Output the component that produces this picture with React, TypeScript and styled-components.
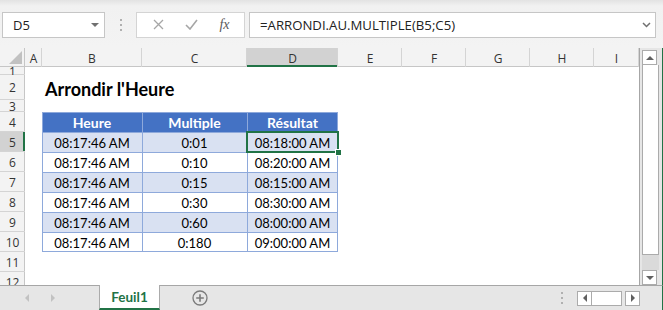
import React from 'react'
import styled, { createGlobalStyle, css } from 'styled-components'

const GlobalStyle = createGlobalStyle`
  html, body {
    margin: 0;
    padding: 0;
  }
  body {
    width: 663px;
    height: 310px;
    overflow: hidden;
    background: #f3f3f3;
    font-family: "Open Sans", "Noto Sans", sans-serif;
  }
`

const GREEN = '#217346'

const columns = ['A', 'B', 'C', 'D', 'E', 'F', 'G', 'H', 'I']
const colWidths = [17, 100, 105, 91, 64, 64, 64, 64, 45]
const rowHeights = [8, 25, 12, 20, 20, 20, 20, 20, 20, 20, 20, 20]

const tableHead = ['Heure', 'Multiple', 'Résultat']
const tableRows = [
  ['08:17:46 AM', '0:01', '08:18:00 AM'],
  ['08:17:46 AM', '0:10', '08:20:00 AM'],
  ['08:17:46 AM', '0:15', '08:15:00 AM'],
  ['08:17:46 AM', '0:30', '08:30:00 AM'],
  ['08:17:46 AM', '0:60', '08:00:00 AM'],
  ['08:17:46 AM', '0:180', '09:00:00 AM'],
]

const Window = styled.div`
  width: 663px;
  height: 310px;
  display: flex;
  flex-direction: column;
  overflow: hidden;
`

const FormulaBar = styled.div`
  height: 48px;
  flex: none;
  display: flex;
  align-items: center;
  padding: 1px 7px 0 2px;
  box-sizing: border-box;
  background: linear-gradient(#e2e2e2 0, #f1f1f1 6px, #f3f3f3 100%);
`

const NameBox = styled.div`
  width: 103px;
  height: 26px;
  box-sizing: border-box;
  border: 1px solid #c6c6c6;
  background: #fff;
  display: flex;
  align-items: center;
  justify-content: space-between;
  padding: 0 5px 0 10px;
  font-size: 13px;
  color: #222;
`

const Caret = styled.span`
  width: 0;
  height: 0;
  border-left: 4px solid transparent;
  border-right: 4px solid transparent;
  border-top: 4px solid #707070;
`

const Grip = styled.div`
  width: 31px;
  display: flex;
  flex-direction: column;
  align-items: center;
  gap: 3px;
  span {
    width: 2px;
    height: 2px;
    background: #b0b0b0;
  }
`

const FxGroup = styled.div`
  width: 109px;
  height: 26px;
  box-sizing: border-box;
  border: 1px solid #d4d4d4;
  background: #fff;
  display: flex;
  align-items: center;
  justify-content: space-around;
  padding: 0 4px 0 6px;
  color: #a6a6a6;
`

const Fx = styled.span`
  font-family: "Liberation Serif", serif;
  font-style: italic;
  font-size: 14px;
  color: #5a5a5a;
`

const FormulaInput = styled.div`
  flex: 1;
  margin-left: 4px;
  height: 26px;
  box-sizing: border-box;
  border: 1px solid #c6c6c6;
  background: #fff;
  display: flex;
  align-items: center;
  justify-content: space-between;
  padding: 0 4px 0 10px;
  font-size: 13.2px;
  color: #222;
`

const SheetArea = styled.div`
  flex: 1;
  display: flex;
  min-height: 0;
`

const GridWrap = styled.div`
  width: 640px;
  box-sizing: border-box;
  border-right: 1px solid #a6a6a6;
  overflow: hidden;
  background: #fff;
`

const Grid = styled.div`
  display: grid;
  grid-template-columns: 25px ${colWidths.map((w) => `${w}px`).join(' ')};
  grid-template-rows: 19px ${rowHeights.map((h) => `${h}px`).join(' ')};
`

const Corner = styled.div`
  background: #f3f3f3;
  box-shadow: inset -1px -1px 0 #c6c6c6;
  position: relative;
  &::after {
    content: '';
    position: absolute;
    right: 3px;
    bottom: 3px;
    border-left: 13px solid transparent;
    border-bottom: 13px solid #c1c1c1;
  }
`

const ColHead = styled.div<{ $active?: boolean }>`
  background: ${(p) => (p.$active ? '#d2d2d2' : '#f3f3f3')};
  box-shadow: inset -1px 0 0 #d4d4d4,
    inset 0 ${(p) => (p.$active ? '-2px 0 ' + GREEN : '-1px 0 #c6c6c6')};
  display: flex;
  align-items: center;
  justify-content: center;
  font-size: 12px;
  color: #333;
  padding-top: 1px;
`

const RowHead = styled.div<{ $active?: boolean }>`
  background: ${(p) => (p.$active ? '#d2d2d2' : '#f3f3f3')};
  box-shadow: inset 0 -1px 0 #d4d4d4,
    inset ${(p) => (p.$active ? '-2px 0 0 ' + GREEN : '-1px 0 0 #c6c6c6')};
  display: flex;
  align-items: center;
  justify-content: center;
  overflow: hidden;
  font-size: 12px;
  line-height: 16px;
  color: #333;
  padding-top: 1px;
  box-sizing: border-box;
`

const Cell = styled.div<{
  $fill?: string
  $head?: boolean
  $framed?: boolean
  $lastCol?: boolean
  $lastRow?: boolean
}>`
  position: relative;
  display: flex;
  align-items: center;
  justify-content: center;
  white-space: nowrap;
  font-family: Lato, "Liberation Sans", sans-serif;
  font-size: 13px;
  color: #000;
  background: ${(p) => p.$fill || '#fff'};
  padding-top: 1px;
  box-sizing: border-box;
  ${(p) =>
    p.$head &&
    css`
      color: #fff;
      font-weight: 700;
      font-size: 14px;
    `}
  ${(p) =>
    p.$framed &&
    css`
      box-shadow: inset 1px 1px 0 #8ea9db
        ${p.$lastCol ? ', inset -1px 0 0 #8ea9db' : ''}
        ${p.$lastRow ? ', inset 0 -1px 0 #8ea9db' : ''};
    `}
`

const Title = styled.div`
  display: flex;
  align-items: center;
  padding: 2px 0 0 3px;
  white-space: nowrap;
  font-family: Lato, "Liberation Sans", sans-serif;
  font-weight: 700;
  font-size: 18px;
  color: #000;
  grid-column: span 3;
`

const Selection = styled.div`
  position: absolute;
  z-index: 2;
  left: -1px;
  top: -1px;
  right: -1px;
  bottom: -1px;
  border: 2px solid ${GREEN};
  pointer-events: none;
  &::after {
    content: '';
    position: absolute;
    right: -5px;
    bottom: -5px;
    width: 5px;
    height: 5px;
    background: ${GREEN};
    border: 1px solid #fff;
  }
`

const VScroll = styled.div`
  flex: 1;
  display: flex;
  flex-direction: column;
  padding: 2px 3px 0 2px;
  background: #e6e6e6;
  border-right: 1px solid ${GREEN};
`

const ScrollBtn = styled.div<{ $dir: 'up' | 'down' | 'left' | 'right' }>`
  width: 15px;
  height: 15px;
  box-sizing: border-box;
  border: 1px solid #ababab;
  background: #fff;
  display: flex;
  align-items: center;
  justify-content: center;
  flex: none;
  &::before {
    content: '';
    width: 0;
    height: 0;
    ${(p) =>
      p.$dir === 'up' &&
      css`
        border-left: 4px solid transparent;
        border-right: 4px solid transparent;
        border-bottom: 4px solid #606060;
      `}
    ${(p) =>
      p.$dir === 'down' &&
      css`
        border-left: 4px solid transparent;
        border-right: 4px solid transparent;
        border-top: 4px solid #606060;
      `}
    ${(p) =>
      p.$dir === 'left' &&
      css`
        border-top: 4px solid transparent;
        border-bottom: 4px solid transparent;
        border-right: 4px solid #606060;
      `}
    ${(p) =>
      p.$dir === 'right' &&
      css`
        border-top: 4px solid transparent;
        border-bottom: 4px solid transparent;
        border-left: 4px solid #606060;
      `}
  }
`

const VThumb = styled.div`
  height: 190px;
  box-sizing: border-box;
  border: 1px solid #ababab;
  border-top: none;
  background: #fff;
`

const VTrack = styled.div`
  flex: 1;
  background: #dadada;
`

const TabBar = styled.div`
  height: 25px;
  flex: none;
  display: flex;
  align-items: stretch;
  background: #e6e6e6;
  border-top: 1px solid #a6a6a6;
  box-sizing: border-box;
  border-right: 1px solid ${GREEN};
`

const TabNav = styled.div`
  width: 99px;
  display: flex;
  align-items: center;
  gap: 22px;
  padding-left: 25px;
  box-sizing: border-box;
`

const NavArrow = styled.span<{ $right?: boolean }>`
  width: 0;
  height: 0;
  border-top: 4px solid transparent;
  border-bottom: 4px solid transparent;
  ${(p) =>
    p.$right
      ? css`border-left: 4px solid #c2c2c2;`
      : css`border-right: 4px solid #c2c2c2;`}
`

const SheetTab = styled.div`
  width: 61px;
  margin-top: -1px;
  box-sizing: border-box;
  background: #fff;
  border-left: 1px solid #ababab;
  border-right: 1px solid #ababab;
  border-bottom: 2px solid ${GREEN};
  display: flex;
  align-items: center;
  justify-content: center;
  font-family: Lato, "Liberation Sans", sans-serif;
  font-weight: 700;
  font-size: 13.5px;
  color: ${GREEN};
`

const AddSheet = styled.div`
  width: 80px;
  display: flex;
  align-items: center;
  justify-content: center;
`

const Spacer = styled.div`
  flex: 1;
`

const HScroll = styled.div`
  display: flex;
  align-items: center;
  padding-right: 22px;
`

const HThumb = styled.div`
  width: 30px;
  height: 15px;
  box-sizing: border-box;
  border: 1px solid #ababab;
  border-left: none;
  background: #fff;
  margin-right: 3px;
`

const HDots = styled(Grip)`
  width: auto;
  margin-right: 14px;
`

export default function App() {
  const tableStart = 3 // index of row 4 in rowHeights
  return (
    <>
      <GlobalStyle />
      <Window>
        <FormulaBar>
          <NameBox>
            D5
            <Caret />
          </NameBox>
          <Grip>
            <span />
            <span />
            <span />
          </Grip>
          <FxGroup>
            <svg width="11" height="11" viewBox="0 0 11 11">
              <path d="M1 1 L10 10 M10 1 L1 10" stroke="#a6a6a6" strokeWidth="1.3" />
            </svg>
            <svg width="13" height="11" viewBox="0 0 13 11">
              <path d="M1 6 L5 10 L12 1" stroke="#a6a6a6" strokeWidth="1.6" fill="none" />
            </svg>
            <Fx>fx</Fx>
          </FxGroup>
          <FormulaInput>
            =ARRONDI.AU.MULTIPLE(B5;C5)
            <svg width="9" height="6" viewBox="0 0 9 6">
              <path d="M1 1 L4.5 4.5 L8 1" stroke="#707070" strokeWidth="1.5" fill="none" />
            </svg>
          </FormulaInput>
        </FormulaBar>

        <SheetArea>
          <GridWrap>
            <Grid>
              <Corner />
              {columns.map((c) => (
                <ColHead key={c} $active={c === 'D'}>
                  {c}
                </ColHead>
              ))}
              {rowHeights.map((_, r) => {
                const rowNum = r + 1
                const t = r - tableStart
                const inTable = t >= 0 && t <= tableRows.length
                return (
                  <React.Fragment key={rowNum}>
                    <RowHead $active={rowNum === 5}>{rowNum}</RowHead>
                    {rowNum === 2 ? (
                      <>
                        <Cell />
                        <Title>Arrondir l'Heure</Title>
                        {columns.slice(4).map((c) => (
                          <Cell key={c} />
                        ))}
                      </>
                    ) : (
                      columns.map((c, ci) => {
                        const tc = ci - 1
                        if (inTable && tc >= 0 && tc < 3) {
                          const head = t === 0
                          const fill = head ? '#4472c4' : t % 2 === 1 ? '#d9e1f2' : '#fff'
                          const text = head ? tableHead[tc] : tableRows[t - 1][tc]
                          return (
                            <Cell
                              key={c}
                              $framed
                              $head={head}
                              $fill={fill}
                              $lastCol={tc === 2}
                              $lastRow={t === tableRows.length}
                            >
                              {text}
                              {rowNum === 5 && c === 'D' && <Selection />}
                            </Cell>
                          )
                        }
                        return <Cell key={c} />
                      })
                    )}
                  </React.Fragment>
                )
              })}
            </Grid>
          </GridWrap>
          <VScroll>
            <ScrollBtn $dir="up" />
            <VThumb />
            <VTrack />
            <ScrollBtn $dir="down" />
          </VScroll>
        </SheetArea>

        <TabBar>
          <TabNav>
            <NavArrow />
            <NavArrow $right />
          </TabNav>
          <SheetTab>Feuil1</SheetTab>
          <AddSheet>
            <svg width="16" height="16" viewBox="0 0 16 16">
              <circle cx="8" cy="8" r="7" stroke="#7a7a7a" strokeWidth="1.3" fill="none" />
              <path d="M8 4.2 V11.8 M4.2 8 H11.8" stroke="#7a7a7a" strokeWidth="1.6" />
            </svg>
          </AddSheet>
          <Spacer />
          <HScroll>
            <HDots>
              <span />
              <span />
              <span />
            </HDots>
            <ScrollBtn $dir="left" />
            <HThumb />
            <ScrollBtn $dir="right" />
          </HScroll>
        </TabBar>
      </Window>
    </>
  )
}
